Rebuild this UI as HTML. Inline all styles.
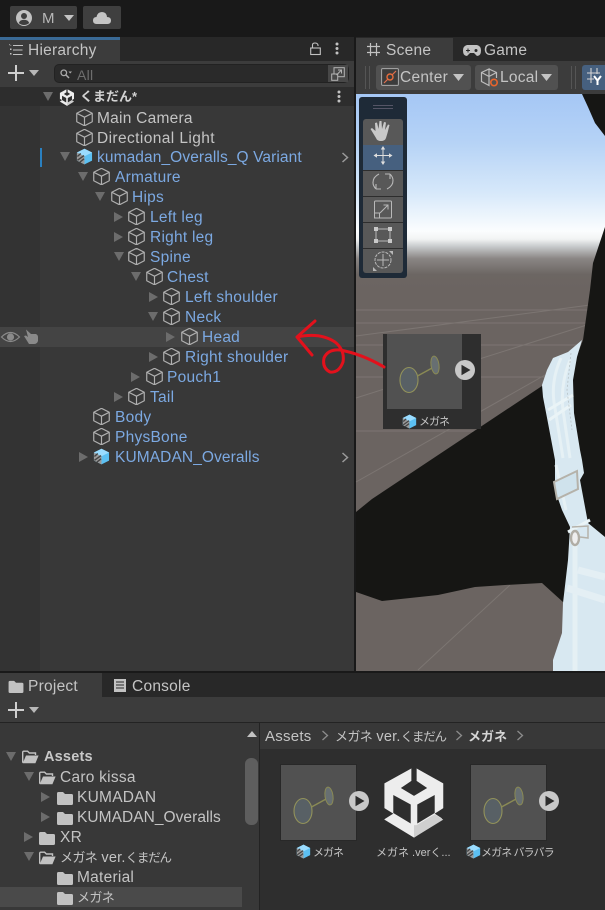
<!DOCTYPE html>
<html><head><meta charset="utf-8"><style>
html,body{margin:0;padding:0;background:#191919}
body{width:605px;height:910px;position:relative;overflow:hidden;font-family:"Liberation Sans","Noto Sans CJK JP",sans-serif;font-size:15.5px;color:#c4c4c4;letter-spacing:.25px}
.a{position:absolute}
.t{position:absolute;white-space:nowrap;line-height:20px;height:20px;margin-top:2px}
.b{color:#7ca9e2}
.j{font-size:12.500px;letter-spacing:-1.200px}
.j i{font-style:normal;font-size:14.500px;letter-spacing:.2px}
.j b{font-weight:normal;font-size:13px;letter-spacing:-.6px}
.s{font-size:11px;letter-spacing:0}
svg{position:absolute;overflow:visible}
</style></head><body>
<svg width="0" height="0" style="left:0;top:0"><defs>
<symbol id="cube" viewBox="1 1 16 16"><path d="M9 1.300L16.300 5V13L9 16.800L1.700 13V5ZM1.700 5L9 8.700L16.300 5M9 8.700V16.800" fill="none" stroke="#b0b0b0" stroke-width="1.100" stroke-linejoin="round"/></symbol>
<symbol id="pre" viewBox="0 0 18 18"><path d="M9 .8L17 4.800V13.400L9 17.400L1 13.400V4.800Z" fill="#5cc0f2"/><path d="M9 .8L17 4.800L9 8.800L1 4.800Z" fill="#9adcff"/><path d="M1 4.800L9 8.800V17.400L1 13.400Z" fill="#9a9a9a"/><path d="M1.500 9L5 5.800M1.500 13L8.500 8M4 15L8.500 11.500" stroke="#444" stroke-width="1.500"/></symbol>
<symbol id="fold" viewBox="0 0 16 14"><path d="M0 2.500Q0 1 1.500 1H6L8 3H14.500Q16 3 16 4.500V12.500Q16 14 14.500 14H1.500Q0 14 0 12.500Z" fill="#c2c2c2"/></symbol>
<symbol id="open" viewBox="0 0 17 14"><path d="M.7 12.800V2.300Q.7 1.200 1.800 1.200H5.600L7.400 3H13.500V5" fill="none" stroke="#c2c2c2" stroke-width="1.400"/><path d="M.7 13.300L4 5.500H16.600L13.400 13.300Z" fill="#c2c2c2"/></symbol>
<symbol id="dn" viewBox="0 0 10 10"><path d="M0 0H10L5 9Z" fill="#6c6c6c"/></symbol>
<symbol id="rt" viewBox="0 0 10 10"><path d="M0 0V10L9 5Z" fill="#6c6c6c"/></symbol>
<symbol id="thumb" viewBox="0 0 75 75"><rect width="75" height="75" fill="#515151"/><ellipse cx="22" cy="46" rx="9" ry="12.500" fill="#586065" stroke="#92925a" stroke-width="1.100"/><path d="M30.500 42L46 33.500" stroke="#8a8a54" stroke-width="1.500"/><ellipse cx="48" cy="31" rx="4" ry="9" transform="rotate(-8 48 31)" fill="#676f72" stroke="#8a8a54" stroke-width="1"/></symbol>
<symbol id="play" viewBox="0 0 20 20"><circle cx="10" cy="10" r="10" fill="#c8c8c8"/><path d="M6.500 4.800L15.500 10L6.500 15.200Z" fill="#2d2d2d"/></symbol>
<symbol id="unity" viewBox="28 18 180 216"><path d="M118 18L207 68V172L118 233L28 178V68Z" fill="#ededed"/><path d="M126 195L181 162L207 178L118 233V195Z" fill="#cfcfcf"/><path d="M110 16H126V60H110ZM118 55L158 82L118 106L78 82ZM55 103L108 132V190L55 158ZM181 103L128 132V190L181 158ZM26 142L55 160L26 178ZM209 142L181 160L209 178Z" fill="#2e2e2e"/></symbol>
</defs></svg>

<!-- top bar -->
<div class="a" style="left:10px;top:6px;width:67px;height:23px;background:#3f3f3f;border-radius:2px"></div>
<svg style="left:16px;top:10px" width="16" height="16" viewBox="0 0 16 16"><circle cx="8" cy="8" r="8" fill="#c2c2c2"/><circle cx="8" cy="6" r="3" fill="#3f3f3f"/><path d="M2.800 13Q4 9.800 8 9.800T13.200 13Q11 15 8 15T2.800 13Z" fill="#3f3f3f"/></svg>
<div class="t" style="left:42px;top:7px;font-size:15px;color:#b8b8b8">M</div>
<svg style="left:64px;top:15px" width="10" height="6"><path d="M0 0H10L5 6Z" fill="#c4c4c4"/></svg>
<div class="a" style="left:83px;top:6px;width:38px;height:23px;background:#3f3f3f;border-radius:2px"></div>
<svg style="left:93px;top:11px" width="18" height="13" viewBox="0 0 18 13"><path d="M3.500 13Q0 13 0 9.500T3.500 6Q4.500 1 9 1T14 6Q18 6 18 9.500T14.500 13Z" fill="#c4c4c4"/></svg>

<!-- hierarchy -->
<div class="a" style="left:0;top:37px;width:354px;height:634px;background:#383838"></div>
<div class="a" style="left:0;top:37px;width:354px;height:24px;background:#282828"></div>
<div class="a" style="left:0;top:37px;width:120px;height:24px;background:#3c3c3c"></div>
<div class="a" style="left:0;top:37px;width:120px;height:3px;background:#3a6a96"></div>
<svg style="left:9px;top:43px" width="14" height="13" viewBox="0 0 14 13"><path d="M4 2.500H14M4 7H13.500M4 11.500H13.500" stroke="#c2c2c2" stroke-width="1.100"/><path d="M0 1L3 3L0 2Z" fill="#c2c2c2"/><path d="M1 5.500h1.500v1.500H1zM1 10h1.500v1.500H1z" fill="#c2c2c2"/></svg>
<div class="t" style="left:28px;top:39px">Hierarchy</div>
<svg style="left:310px;top:42px" width="12" height="13" viewBox="0 0 12 13"><rect x=".7" y="6" width="9.600" height="6.500" fill="none" stroke="#c2c2c2" stroke-width="1.100"/><path d="M2.500 6V3Q2.500 1 5 1T8 3V4" fill="none" stroke="#c2c2c2" stroke-width="1.100"/></svg>
<svg style="left:335px;top:42px" width="4" height="13"><circle cx="2" cy="2" r="1.500" fill="#c2c2c2"/><circle cx="2" cy="6.500" r="1.500" fill="#c2c2c2"/><circle cx="2" cy="11" r="1.500" fill="#c2c2c2"/></svg>
<div class="a" style="left:0;top:61px;width:354px;height:26px;background:#3c3c3c"></div>
<svg style="left:8px;top:65px" width="16" height="16"><path d="M8 0V16M0 8H16" stroke="#cfcfcf" stroke-width="2"/></svg>
<svg style="left:29px;top:70px" width="10" height="6"><path d="M0 0H10L5 6Z" fill="#b8b8b8"/></svg>
<div class="a" style="left:54px;top:64px;width:295px;height:19px;background:#2a2a2a;border-radius:5px;border:1px solid #222;box-sizing:border-box"></div>
<svg style="left:60px;top:69px" width="12" height="10" viewBox="0 0 12 10"><circle cx="3.800" cy="3.800" r="2.800" fill="none" stroke="#aaa" stroke-width="1.300"/><path d="M6 6L9 9" stroke="#aaa" stroke-width="1.500"/><path d="M8.500 2.500H12L10.200 4.500Z" fill="#aaa"/></svg>
<div class="t" style="left:77px;top:63px;color:#6e6e6e;font-size:14px">All</div>
<div class="a" style="left:328px;top:65px;width:20px;height:17px;background:#484848"></div>
<svg style="left:331px;top:67px" width="14" height="14" viewBox="0 0 14 14"><rect x="3" y=".7" width="10.300" height="9" fill="none" stroke="#b5b5b5"/><rect x=".7" y="7" width="6" height="6.300" fill="#484848" stroke="#b5b5b5"/><path d="M5.500 8L10 3.500M7 3H10.500V6.500" stroke="#b5b5b5" fill="none"/></svg>

<div class="a" style="left:0;top:87px;width:354px;height:19px;background:#2d2d2d"></div>
<svg style="left:43px;top:92px" width="10" height="10"><use href="#dn" width="10" height="10"/></svg>
<svg style="left:59px;top:89px" width="16" height="17"><use href="#unity" width="16" height="17"/></svg>
<div class="t" style="left:80px;top:85px;font-weight:bold;color:#d2d2d2;font-size:13px;letter-spacing:0">くまだん*</div>
<svg style="left:337px;top:90px" width="4" height="13"><circle cx="2" cy="2" r="1.500" fill="#c2c2c2"/><circle cx="2" cy="6.500" r="1.500" fill="#c2c2c2"/><circle cx="2" cy="11" r="1.500" fill="#c2c2c2"/></svg>
<div class="a" style="left:0;top:106px;width:40px;height:565px;background:#333"></div>
<div class="a" style="left:40px;top:148px;width:2px;height:19px;background:#2a80c0"></div>
<div class="a" style="left:0;top:327px;width:354px;height:20px;background:#444"></div>
<svg style="left:1px;top:331px" width="19" height="12" viewBox="0 0 19 12"><path d="M.5 6Q9.500 -3 18.500 6Q9.500 15 .5 6Z" fill="none" stroke="#8a8a8a" stroke-width="1.200"/><circle cx="9.500" cy="6" r="3.600" fill="#8a8a8a"/></svg>
<svg style="left:23px;top:329px" width="15" height="15" viewBox="0 0 15 15"><path d="M3 0.500L8 5H13Q15 6 15 8V12Q14 15 11 15H6L1 7L3 6.500L5 8Z" fill="#8a8a8a"/></svg>

<!-- rows -->
<svg style="left:76px;top:109px" width="17" height="17"><use href="#cube" width="17" height="17"/></svg><div class="t" style="left:97px;top:107px">Main Camera</div>
<svg style="left:76px;top:129px" width="17" height="17"><use href="#cube" width="17" height="17"/></svg><div class="t" style="left:97px;top:127px;letter-spacing:.4px">Directional Light</div>
<svg style="left:60px;top:152px" width="10" height="10"><use href="#dn" width="10" height="10"/></svg><svg style="left:76px;top:148px" width="17" height="17"><use href="#pre" width="17" height="17"/></svg><div class="t b" style="left:97px;top:146px;letter-spacing:.1px">kumadan_Overalls_Q Variant</div>
<svg style="left:341px;top:152px" width="8" height="11"><path d="M1.500 1L6.500 5.500L1.500 10" fill="none" stroke="#9a9a9a" stroke-width="1.500"/></svg>
<svg style="left:78px;top:172px" width="10" height="10"><use href="#dn" width="10" height="10"/></svg><svg style="left:93px;top:168px" width="17" height="17"><use href="#cube" width="17" height="17"/></svg><div class="t b" style="left:115px;top:166px">Armature</div>
<svg style="left:95px;top:192px" width="10" height="10"><use href="#dn" width="10" height="10"/></svg><svg style="left:111px;top:188px" width="17" height="17"><use href="#cube" width="17" height="17"/></svg><div class="t b" style="left:132px;top:186px">Hips</div>
<svg style="left:114px;top:212px" width="10" height="10"><use href="#rt" width="10" height="10"/></svg><svg style="left:128px;top:208px" width="17" height="17"><use href="#cube" width="17" height="17"/></svg><div class="t b" style="left:150px;top:206px">Left leg</div>
<svg style="left:114px;top:232px" width="10" height="10"><use href="#rt" width="10" height="10"/></svg><svg style="left:128px;top:228px" width="17" height="17"><use href="#cube" width="17" height="17"/></svg><div class="t b" style="left:150px;top:226px">Right leg</div>
<svg style="left:114px;top:252px" width="10" height="10"><use href="#dn" width="10" height="10"/></svg><svg style="left:128px;top:248px" width="17" height="17"><use href="#cube" width="17" height="17"/></svg><div class="t b" style="left:150px;top:246px">Spine</div>
<svg style="left:131px;top:272px" width="10" height="10"><use href="#dn" width="10" height="10"/></svg><svg style="left:146px;top:268px" width="17" height="17"><use href="#cube" width="17" height="17"/></svg><div class="t b" style="left:167px;top:266px">Chest</div>
<svg style="left:149px;top:292px" width="10" height="10"><use href="#rt" width="10" height="10"/></svg><svg style="left:163px;top:288px" width="17" height="17"><use href="#cube" width="17" height="17"/></svg><div class="t b" style="left:185px;top:286px">Left shoulder</div>
<svg style="left:148px;top:312px" width="10" height="10"><use href="#dn" width="10" height="10"/></svg><svg style="left:163px;top:308px" width="17" height="17"><use href="#cube" width="17" height="17"/></svg><div class="t b" style="left:185px;top:306px">Neck</div>
<svg style="left:166px;top:332px" width="10" height="10"><use href="#rt" width="10" height="10"/></svg><svg style="left:181px;top:328px" width="17" height="17"><use href="#cube" width="17" height="17"/></svg><div class="t b" style="left:202px;top:326px">Head</div>
<svg style="left:149px;top:352px" width="10" height="10"><use href="#rt" width="10" height="10"/></svg><svg style="left:163px;top:348px" width="17" height="17"><use href="#cube" width="17" height="17"/></svg><div class="t b" style="left:185px;top:346px">Right shoulder</div>
<svg style="left:131px;top:372px" width="10" height="10"><use href="#rt" width="10" height="10"/></svg><svg style="left:146px;top:368px" width="17" height="17"><use href="#cube" width="17" height="17"/></svg><div class="t b" style="left:167px;top:366px">Pouch1</div>
<svg style="left:114px;top:392px" width="10" height="10"><use href="#rt" width="10" height="10"/></svg><svg style="left:128px;top:388px" width="17" height="17"><use href="#cube" width="17" height="17"/></svg><div class="t b" style="left:150px;top:386px">Tail</div>
<svg style="left:93px;top:408px" width="17" height="17"><use href="#cube" width="17" height="17"/></svg><div class="t b" style="left:115px;top:406px">Body</div>
<svg style="left:93px;top:428px" width="17" height="17"><use href="#cube" width="17" height="17"/></svg><div class="t b" style="left:115px;top:426px">PhysBone</div>
<svg style="left:79px;top:452px" width="10" height="10"><use href="#rt" width="10" height="10"/></svg><svg style="left:93px;top:448px" width="17" height="17"><use href="#pre" width="17" height="17"/></svg><div class="t b" style="left:115px;top:446px;letter-spacing:.1px">KUMADAN_Overalls</div>
<svg style="left:341px;top:452px" width="8" height="11"><path d="M1.500 1L6.500 5.500L1.500 10" fill="none" stroke="#9a9a9a" stroke-width="1.500"/></svg>

<!-- scene header -->
<div class="a" style="left:354px;top:37px;width:2px;height:634px;background:#191919"></div>
<div class="a" style="left:356px;top:37px;width:249px;height:24px;background:#282828"></div>
<div class="a" style="left:356px;top:38px;width:97px;height:23px;background:#3c3c3c"></div>
<svg style="left:367px;top:43px" width="13" height="13"><path d="M3.500 0V13M9.500 0V13M0 3.500H13M0 9.500H13" stroke="#c2c2c2" stroke-width="1.200"/></svg>
<div class="t" style="left:386px;top:39px">Scene</div>
<svg style="left:463px;top:45px" width="18" height="11" viewBox="0 0 18 11"><path d="M4 0H14Q18 1 18 5.500Q18 11 14 11L11 8H7L4 11Q0 11 0 5.500Q0 1 4 0Z" fill="#c2c2c2"/><path d="M3 5.500h4M5 3.500v4" stroke="#282828"/><circle cx="13" cy="5.500" r="1.500" fill="#282828"/></svg>
<div class="t" style="left:484px;top:39px">Game</div>
<div class="a" style="left:356px;top:61px;width:249px;height:33px;background:#3c3c3c"></div>
<div class="a" style="left:365px;top:66px;width:5px;height:23px;border-left:1px solid #555;border-right:1px solid #555;box-sizing:border-box"></div>
<div class="a" style="left:376px;top:65px;width:95px;height:25px;background:#515151;border-radius:3px"></div>
<svg style="left:381px;top:68px" width="18" height="18" viewBox="0 0 18 18"><rect x=".6" y=".6" width="16.800" height="16.800" rx="1" fill="#3c3c3c" stroke="#aaa"/><path d="M3 15L15 3" stroke="#e07050" stroke-width="1.200"/><circle cx="9" cy="9" r="3" fill="#3c3c3c" stroke="#e86c3c" stroke-width="1.400"/></svg>
<div class="t" style="left:400px;top:66px">Center</div>
<svg style="left:453px;top:74px" width="11" height="7"><path d="M0 0H11L5.500 7Z" fill="#c4c4c4"/></svg>
<div class="a" style="left:475px;top:65px;width:83px;height:25px;background:#515151;border-radius:3px"></div>
<svg style="left:480px;top:68px" width="20" height="20" viewBox="0 0 20 20"><path d="M9 1L16.500 4.500V10M9 17.500L1.500 13.500V4.500L9 1ZM1.500 4.500L9 8.500L16.500 4.500M9 8.500V17" fill="none" stroke="#bdbdbd" stroke-width="1.200"/><circle cx="14" cy="14.500" r="3.200" fill="#515151" stroke="#e8642c" stroke-width="1.600"/></svg>
<div class="t" style="left:500px;top:66px">Local</div>
<svg style="left:541px;top:74px" width="11" height="7"><path d="M0 0H11L5.500 7Z" fill="#c4c4c4"/></svg>
<div class="a" style="left:571px;top:66px;width:5px;height:23px;border-left:1px solid #555;border-right:1px solid #555;box-sizing:border-box"></div>
<div class="a" style="left:582px;top:65px;width:23px;height:25px;background:#46607f;border-radius:3px 0 0 3px"></div>
<svg style="left:587px;top:68px" width="18" height="18" viewBox="0 0 18 18"><path d="M4 0V15M10 0V6M0 5H13M0 11H7" stroke="#d5d5d5" stroke-width="1.100" fill="none"/><path d="M7 8L10.500 12.500V17M14 8L10.500 12.500" stroke="#fff" stroke-width="2" fill="none"/></svg>

<!-- scene view -->
<svg style="left:356px;top:94px" width="249" height="577" viewBox="356 94 249 577">
<defs><linearGradient id="sky" x1="0" y1="94" x2="0" y2="290" gradientUnits="userSpaceOnUse">
<stop offset="0" stop-color="#a5c7f5"/><stop offset=".25" stop-color="#b6d3f6"/><stop offset=".5" stop-color="#d6e8fa"/><stop offset=".7" stop-color="#fbfdfe"/><stop offset=".74" stop-color="#f2f4f4"/><stop offset=".78" stop-color="#c5c8ca"/><stop offset=".84" stop-color="#8a8684"/><stop offset=".92" stop-color="#6c6663"/><stop offset="1" stop-color="#6b6461"/></linearGradient></defs>
<rect x="356" y="94" width="249" height="577" fill="url(#sky)"/>
<rect x="356" y="290" width="249" height="381" fill="#6b6461"/>
<g stroke="#8d8783" stroke-width="1" fill="none" opacity=".5">
<path d="M356 310H590M356 323H590M356 345H590M356 377H545M356 431H490"/>
<path d="M356 336L590 305M356 398L590 324M356 482L545 375M418 670L510 585"/>
</g>
<path d="M356 512L372 499L542 386L605 400V602H563L542 583L505 585L475 587L438 595L382 601L356 592Z" fill="#161614"/>
<path d="M582 94H605V136L595 123L588 107ZM605 227L593 263L590 290L583 340L560 400L570 520L590 530L605 537Z" fill="#161614"/>
<path d="M582 340L568 352L553 358L547 370L542 385L543 397L548 423L555 460L555 490L562 510L570 527L568 560L563 603L562 633L553 660L553 671H605V537L588 523L580 480L584 473L582 460L580 450L574 413L573 380L577 357Z" fill="#d8e8f1"/>
<path d="M561 358Q551 380 554 402L563 458M570 360Q560 385 563 410L570 458M556 465L566 510" stroke="#e6f1f5" stroke-width="3" fill="none"/>
<path d="M575 535V671" stroke="#e5f0f4" stroke-width="5" fill="none"/>
<path d="M548 410L573 395M549 420L571 405" stroke="#eaf4f7" stroke-width="3" fill="none"/>
<path d="M571 353L567 390L572 430" stroke="#b8c2c6" stroke-width=".8" stroke-dasharray="2 2" fill="none"/>
<path d="M578 570L605 577M567 588L605 600" stroke="#e4eff4" stroke-width="7" fill="none"/>
<path d="M568 532L590 520" stroke="#eaf4f7" stroke-width="3" fill="none"/>
<path d="M554 482L577 471L578 489L557 499Z" fill="#cfe2ec" stroke="#b5b2aa" stroke-width="2"/>
<path d="M572 527L588 526L588 538L580 537" fill="none" stroke="#b5b2aa" stroke-width="1.500"/>
<ellipse cx="575" cy="538" rx="4" ry="7" fill="#eee" stroke="#b0ada5" stroke-width="2.400"/>
</svg>

<!-- tools -->
<div class="a" style="left:359px;top:97px;width:48px;height:181px;background:#1e2a37;border-radius:3px"></div>
<div class="a" style="left:373px;top:105px;width:20px;height:4px;border-top:1px solid #556;border-bottom:1px solid #556;box-sizing:border-box"></div>
<div class="a" style="left:363px;top:119px;width:40px;height:154px;border-radius:3px;background:#585858"></div>
<div class="a" style="left:363px;top:145px;width:40px;height:25px;background:#46607f"></div>
<div class="a" style="left:363px;top:170px;width:40px;height:1px;background:#2d2d2d"></div>
<div class="a" style="left:363px;top:196px;width:40px;height:1px;background:#2d2d2d"></div>
<div class="a" style="left:363px;top:222px;width:40px;height:1px;background:#2d2d2d"></div>
<div class="a" style="left:363px;top:248px;width:40px;height:1px;background:#2d2d2d"></div>
<svg style="left:363px;top:119px" width="40" height="154" viewBox="0 0 40 154">
<path d="M13 19Q10 14 7.500 10L9 9L12.500 12L12 4L14 3.500L15.500 10L16.500 2L18.500 2L19 10L21 3L23 3.500L22 11L25 5.500L26.500 6L24.500 14L23 19Q22 22 18 22T13 19Z" fill="#c8c8c8"/>
<path d="M20 29V44M12 36.500H28" stroke="#dedede" stroke-width="1"/><path d="M20 27L17.800 30.500H22.200ZM20 46L17.800 42.500H22.200ZM10.500 36.500L14 34.300V38.700ZM29.500 36.500L26 34.300V38.700Z" fill="#dedede"/>
<path d="M16 55Q10 58 10 63.500Q10 67 13 70M24 70Q30 67 30 61.500Q30 58 27 55M27 55V60M27 55H22M13 70V65M13 70H18" fill="none" stroke="#b8b8b8" stroke-width="1.100"/>
<rect x="11.500" y="82" width="17" height="17" rx="1" fill="none" stroke="#b8b8b8"/><rect x="11.500" y="94" width="5" height="5" fill="none" stroke="#b8b8b8"/><path d="M17 94L25 86M20.500 86H25V90.500" fill="none" stroke="#b8b8b8"/>
<path d="M13 110H27V122H13Z" fill="none" stroke="#b8b8b8" stroke-width="1"/><path d="M11 108h4v4h-4zM25 108h4v4h-4zM11 120h4v4h-4zM25 120h4v4h-4z" fill="#c8c8c8"/>
<circle cx="20" cy="141" r="8" fill="none" stroke="#b8b8b8" stroke-width="1" stroke-dasharray="3 1"/><path d="M20 135V147M14 141H26" stroke="#b8b8b8"/><path d="M10 152V148L14 152ZM30 132V136L26 132Z" fill="#b8b8b8"/>
</svg>

<!-- project -->
<div class="a" style="left:0;top:671px;width:605px;height:239px;background:#383838"></div>
<div class="a" style="left:0;top:671px;width:605px;height:2px;background:#191919"></div>
<div class="a" style="left:0;top:673px;width:605px;height:24px;background:#282828"></div>
<div class="a" style="left:0;top:673px;width:102px;height:24px;background:#3c3c3c"></div>
<svg style="left:8px;top:680px" width="16" height="13"><use href="#fold" width="16" height="13"/></svg>
<div class="t" style="left:28px;top:675px">Project</div>
<svg style="left:114px;top:679px" width="12" height="13" viewBox="0 0 12 13"><rect width="12" height="13" fill="#c2c2c2"/><path d="M2 3H10M2 6H10M2 9H10" stroke="#282828"/></svg>
<div class="t" style="left:132px;top:675px">Console</div>
<div class="a" style="left:0;top:697px;width:605px;height:25px;background:#3c3c3c"></div>
<div class="a" style="left:0;top:722px;width:605px;height:1px;background:#232323"></div>
<svg style="left:8px;top:702px" width="16" height="16"><path d="M8 0V16M0 8H16" stroke="#cfcfcf" stroke-width="2"/></svg>
<svg style="left:29px;top:707px" width="10" height="6"><path d="M0 0H10L5 6Z" fill="#b8b8b8"/></svg>
<div class="a" style="left:0;top:887px;width:242px;height:20px;background:#4a4a4a"></div>
<svg style="left:6px;top:752px" width="10" height="10"><use href="#dn" width="10" height="10"/></svg><svg style="left:22px;top:750px" width="17" height="14"><use href="#open" width="17" height="14"/></svg><div class="t" style="left:44px;top:745px;font-weight:bold;color:#c8c8c8;font-size:14.500px;letter-spacing:.2px">Assets</div>
<svg style="left:24px;top:772px" width="10" height="10"><use href="#dn" width="10" height="10"/></svg><svg style="left:39px;top:771px" width="17" height="14"><use href="#open" width="17" height="14"/></svg><div class="t" style="left:60px;top:766px">Caro kissa</div>
<svg style="left:41px;top:792px" width="10" height="10"><use href="#rt" width="10" height="10"/></svg><svg style="left:57px;top:791px" width="16" height="14"><use href="#fold" width="16" height="14"/></svg><div class="t" style="left:77px;top:786px">KUMADAN</div>
<svg style="left:41px;top:812px" width="10" height="10"><use href="#rt" width="10" height="10"/></svg><svg style="left:57px;top:811px" width="16" height="14"><use href="#fold" width="16" height="14"/></svg><div class="t" style="left:77px;top:806px;letter-spacing:.05px">KUMADAN_Overalls</div>
<svg style="left:24px;top:832px" width="10" height="10"><use href="#rt" width="10" height="10"/></svg><svg style="left:39px;top:831px" width="16" height="14"><use href="#fold" width="16" height="14"/></svg><div class="t" style="left:60px;top:826px">XR</div>
<svg style="left:24px;top:852px" width="10" height="10"><use href="#dn" width="10" height="10"/></svg><svg style="left:39px;top:851px" width="17" height="14"><use href="#open" width="17" height="14"/></svg><div class="t j" style="left:60px;top:846px"><b>メガネ</b><i> ver.</i>くまだん</div>
<svg style="left:57px;top:871px" width="16" height="14"><use href="#fold" width="16" height="14"/></svg><div class="t" style="left:77px;top:866px">Material</div>
<svg style="left:57px;top:891px" width="16" height="14"><use href="#fold" width="16" height="14"/></svg><div class="t j" style="left:77px;top:886px"><b>メガネ</b></div>
<svg style="left:247px;top:731px" width="10" height="6"><path d="M0 6H10L5 0Z" fill="#c2c2c2"/></svg>
<div class="a" style="left:245px;top:758px;width:13px;height:67px;background:#5e5e5e;border-radius:6px"></div>
<div class="a" style="left:259px;top:723px;width:1px;height:187px;background:#232323"></div>
<div class="a" style="left:260px;top:723px;width:345px;height:26px;background:#383838"></div>
<div class="a" style="left:260px;top:749px;width:345px;height:161px;background:#2e2e2e"></div>
<div class="t" style="left:265px;top:725px;font-size:15px">Assets</div>
<svg style="left:321px;top:730px" width="8" height="11"><path d="M1.500 1L6.500 5.500L1.500 10" fill="none" stroke="#8c8c8c" stroke-width="1.300"/></svg>
<div class="t j" style="left:335px;top:725px"><b>メガネ</b><i> ver.</i>くまだん</div>
<svg style="left:455px;top:730px" width="8" height="11"><path d="M1.500 1L6.500 5.500L1.500 10" fill="none" stroke="#8c8c8c" stroke-width="1.300"/></svg>
<div class="t" style="left:468px;top:725px;font-size:13px;letter-spacing:0;font-weight:bold;color:#d5d5d5">メガネ</div>
<svg style="left:516px;top:730px" width="8" height="11"><path d="M1.500 1L6.500 5.500L1.500 10" fill="none" stroke="#8c8c8c" stroke-width="1.300"/></svg>

<div class="a" style="left:280px;top:764px;width:77px;height:77px;background:#282828"></div>
<svg style="left:281px;top:765px" width="75" height="75"><use href="#thumb" width="75" height="75"/></svg>
<svg style="left:349px;top:791px" width="20" height="20"><use href="#play" width="20" height="20"/></svg>
<svg style="left:296px;top:844px" width="15" height="15"><use href="#pre" width="15" height="15"/></svg>
<div class="t s" style="left:313px;top:841px;letter-spacing:-1px">メガネ</div>
<svg style="left:384px;top:767px" width="60" height="71"><use href="#unity" width="60" height="71"/></svg>
<div class="t s" style="left:376px;top:841px">メガネ .verく...</div>
<div class="a" style="left:470px;top:764px;width:77px;height:77px;background:#282828"></div>
<svg style="left:471px;top:765px" width="75" height="75"><use href="#thumb" width="75" height="75"/></svg>
<svg style="left:539px;top:791px" width="20" height="20"><use href="#play" width="20" height="20"/></svg>
<svg style="left:466px;top:844px" width="15" height="15"><use href="#pre" width="15" height="15"/></svg>
<div class="t s" style="left:481px;top:841px;letter-spacing:-.9px">メガネ バラバラ</div>

<!-- dragged preview -->
<div class="a" style="left:383px;top:334px;width:98px;height:95px;background:#2e2e2e"></div>
<svg style="left:387px;top:334px" width="75" height="75"><use href="#thumb" width="75" height="75"/></svg>
<svg style="left:455px;top:360px" width="20" height="20"><use href="#play" width="20" height="20"/></svg>
<svg style="left:402px;top:414px" width="15" height="15"><use href="#pre" width="15" height="15"/></svg>
<div class="t s" style="left:419px;top:410px;letter-spacing:-1px">メガネ</div>

<!-- red arrow -->
<svg style="left:0;top:0" width="605" height="910"><path d="M315 321L297 337L312 355M297 337Q320 332 335 342Q345 350 343 362Q339 373 330 372Q322 368 324 358Q328 349 340 350Q362 354 384 367" fill="none" stroke="#e3111c" stroke-width="3" stroke-linecap="round" stroke-linejoin="round"/></svg>
</body></html>
